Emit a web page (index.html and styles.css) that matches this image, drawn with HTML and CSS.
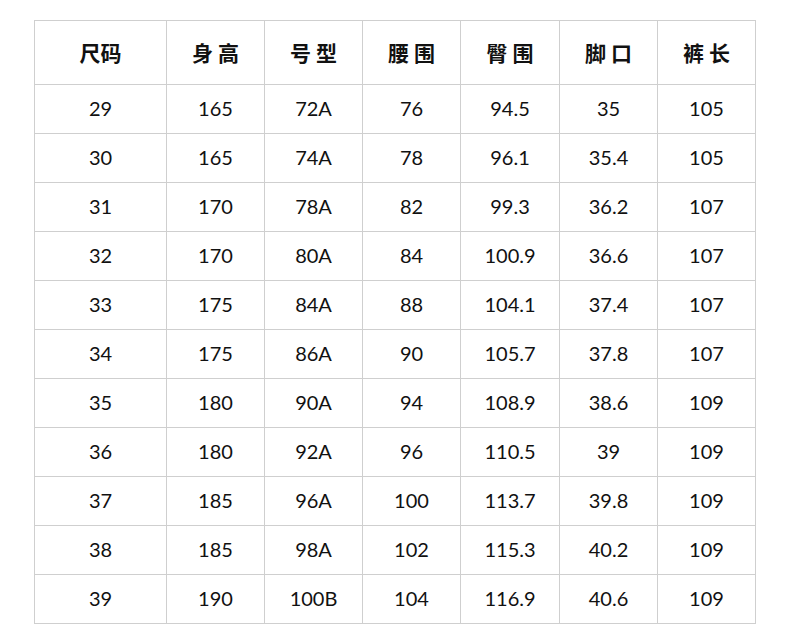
FILE: index.html
```html
<!DOCTYPE html>
<html lang="zh">
<head>
<meta charset="utf-8">
<link rel="stylesheet" href="styles.css">
</head>
<body>
<table class="size-table">
  <colgroup>
    <col class="c-first"><col class="c"><col class="c"><col class="c"><col class="c-wide"><col class="c"><col class="c">
  </colgroup>
  <thead>
    <tr><th>尺码</th><th>身 高</th><th>号 型</th><th>腰 围</th><th>臀 围</th><th>脚 口</th><th>裤 长</th></tr>
  </thead>
  <tbody>
    <tr><td>29</td><td>165</td><td>72A</td><td>76</td><td>94.5</td><td>35</td><td>105</td></tr>
    <tr><td>30</td><td>165</td><td>74A</td><td>78</td><td>96.1</td><td>35.4</td><td>105</td></tr>
    <tr><td>31</td><td>170</td><td>78A</td><td>82</td><td>99.3</td><td>36.2</td><td>107</td></tr>
    <tr><td>32</td><td>170</td><td>80A</td><td>84</td><td>100.9</td><td>36.6</td><td>107</td></tr>
    <tr><td>33</td><td>175</td><td>84A</td><td>88</td><td>104.1</td><td>37.4</td><td>107</td></tr>
    <tr><td>34</td><td>175</td><td>86A</td><td>90</td><td>105.7</td><td>37.8</td><td>107</td></tr>
    <tr><td>35</td><td>180</td><td>90A</td><td>94</td><td>108.9</td><td>38.6</td><td>109</td></tr>
    <tr><td>36</td><td>180</td><td>92A</td><td>96</td><td>110.5</td><td>39</td><td>109</td></tr>
    <tr><td>37</td><td>185</td><td>96A</td><td>100</td><td>113.7</td><td>39.8</td><td>109</td></tr>
    <tr><td>38</td><td>185</td><td>98A</td><td>102</td><td>115.3</td><td>40.2</td><td>109</td></tr>
    <tr><td>39</td><td>190</td><td>100B</td><td>104</td><td>116.9</td><td>40.6</td><td>109</td></tr>
  </tbody>
</table>
</body>
</html>
```
FILE: styles.css
```css
html, body {
  margin: 0;
  padding: 0;
  background: #ffffff;
}
body {
  padding: 20px 0 0 34px;
}
.size-table {
  border-collapse: collapse;
  table-layout: fixed;
  width: 722px;
  color: #111;
}
.c-first { width: 132px; }
.c { width: 98px; }
.c-wide { width: 99px; }
.size-table th,
.size-table td {
  border: 1px solid #cfcfcf;
  text-align: center;
  white-space: pre;
}
.size-table th {
  height: 61px;
  padding: 0 0 2px 0;
  font-family: "Noto Sans CJK SC", "Noto Sans", sans-serif;
  font-size: 21px;
  font-weight: 700;
}
.size-table td {
  height: 45px;
  padding: 0 0 3px 0;
  font-family: "Lato", "DejaVu Sans", sans-serif;
  font-size: 20px;
  font-weight: 400;
}
```
